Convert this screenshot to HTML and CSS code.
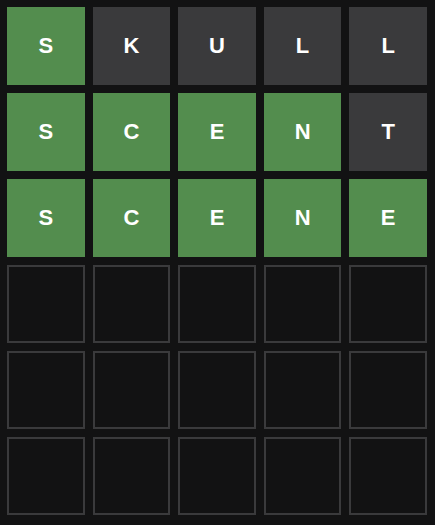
FILE: index.html
```html
<!DOCTYPE html>
<html>
<head>
<meta charset="utf-8">
<link rel="stylesheet" href="styles.css">
</head>
<body>
<div class="board">
  <div class="tile correct">S</div>
  <div class="tile absent">K</div>
  <div class="tile absent">U</div>
  <div class="tile absent">L</div>
  <div class="tile absent">L</div>

  <div class="tile correct">S</div>
  <div class="tile correct">C</div>
  <div class="tile correct">E</div>
  <div class="tile correct">N</div>
  <div class="tile absent">T</div>

  <div class="tile correct">S</div>
  <div class="tile correct">C</div>
  <div class="tile correct">E</div>
  <div class="tile correct">N</div>
  <div class="tile correct">E</div>

  <div class="tile empty"></div>
  <div class="tile empty"></div>
  <div class="tile empty"></div>
  <div class="tile empty"></div>
  <div class="tile empty"></div>

  <div class="tile empty"></div>
  <div class="tile empty"></div>
  <div class="tile empty"></div>
  <div class="tile empty"></div>
  <div class="tile empty"></div>

  <div class="tile empty"></div>
  <div class="tile empty"></div>
  <div class="tile empty"></div>
  <div class="tile empty"></div>
  <div class="tile empty"></div>
</div>
</body>
</html>
```
FILE: styles.css
```css
html, body {
  margin: 0;
  padding: 0;
  background: #121213;
}
body {
  padding: 7px;
  font-family: "Liberation Sans", Arial, sans-serif;
}
.board {
  width: 420px;
  display: grid;
  grid-template-columns: repeat(5, 1fr);
  grid-template-rows: repeat(6, 78px);
  gap: 8px;
}
.tile {
  display: flex;
  align-items: center;
  justify-content: center;
  box-sizing: border-box;
  color: #ffffff;
  font-weight: bold;
  font-size: 22px;
}
.correct {
  background: #538d4e;
}
.absent {
  background: #3a3a3c;
}
.empty {
  border: 2px solid #3a3a3c;
}
```
